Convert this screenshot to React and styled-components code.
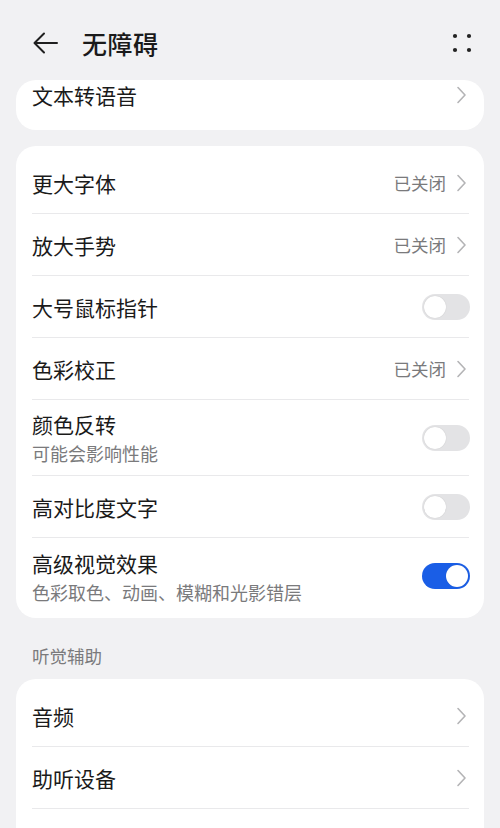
import React from "react";
import styled, { createGlobalStyle } from "styled-components";

const GlobalStyle = createGlobalStyle`
  html, body {
    margin: 0;
    padding: 0;
    background: #f1f1f3;
  }
  body {
    font-family: "Noto Sans CJK SC", "Noto Sans", sans-serif;
    color: #1a1a1a;
  }
`;

const Page = styled.div`
  width: 500px;
  height: 828px;
  overflow: hidden;
  background: #f1f1f3;
  padding: 0 16px;
  box-sizing: border-box;
`;

const Header = styled.div`
  height: 80px;
  box-sizing: border-box;
  padding-top: 28px;
  display: flex;
  align-items: flex-start;
`;

const BackButton = styled.div`
  width: 30px;
  height: 30px;
  margin-left: 15px;
  display: flex;
  align-items: center;
  justify-content: center;
`;

const Title = styled.h1`
  margin: 0 0 0 21px;
  font-size: 25px;
  font-weight: 500;
  line-height: 30px;
  flex: 1;
  letter-spacing: 0.5px;
`;

const MoreButton = styled.div`
  width: 30px;
  height: 30px;
  margin-right: 7px;
  display: flex;
  align-items: center;
  justify-content: center;
`;

const Card = styled.div`
  background: #fff;
  border-radius: 20px;
  padding: ${(p) => (p.$top ? "0" : "6px 0 4px")};
  margin-bottom: ${(p) => (p.$gap ? "16px" : "0")};
  height: ${(p) => (p.$top ? "50px" : "auto")};
  overflow: hidden;
`;

const Row = styled.div`
  display: flex;
  align-items: ${(p) => (p.$top ? "flex-start" : "center")};
  min-height: ${(p) => (p.$top ? "30px" : p.$sub ? "76px" : "62px")};
  margin: 0 15px 0 16px;
  box-sizing: border-box;
  border-bottom: ${(p) => (p.$last ? "none" : "1px solid #e9e9eb")};
  opacity: ${(p) => (p.$faded ? 0.12 : 1)};
`;

const Texts = styled.div`
  flex: 1;
  display: flex;
  flex-direction: column;
  gap: 3px;
`;

const Label = styled.div`
  font-size: 21px;
  line-height: ${(p) => (p.$tall ? "30px" : "28px")};
  color: #1a1a1a;
`;

const Sub = styled.div`
  font-size: 18px;
  line-height: 24px;
  color: #7a7a7c;
`;

const Value = styled.span`
  font-size: 17.5px;
  color: #7a7a7c;
  margin-right: 9px;
`;

const SectionTitle = styled.div`
  font-size: 17.5px;
  line-height: 24px;
  color: #7a7a7c;
  padding: 26px 16px 11px;
`;

const ChevronBox = styled.div`
  height: 30px;
  display: flex;
  align-items: center;
`;

const Track = styled.div`
  width: 48px;
  height: 26px;
  border-radius: 13px;
  background: ${(p) => (p.$on ? "#1a5ee6" : "#e3e3e5")};
  position: relative;
  flex-shrink: 0;
  margin-right: -1px;
`;

const Knob = styled.div`
  position: absolute;
  top: 2px;
  left: ${(p) => (p.$on ? "24px" : "2px")};
  width: 22px;
  height: 22px;
  border-radius: 50%;
  background: #fff;
  box-shadow: 0 0 1px rgba(0, 0, 0, 0.2);
`;

const Chevron = () => (
  <svg width="12" height="18" viewBox="0 0 12 18" style={{ marginRight: 2 }}>
    <path d="M3 1.5 L10 9 L3 16.5" fill="none" stroke="#b4b4b6" strokeWidth="1.6" strokeLinecap="round" strokeLinejoin="round" />
  </svg>
);

const Toggle = ({ on }) => (
  <Track $on={on}>
    <Knob $on={on} />
  </Track>
);

const Item = ({ label, sub, value, toggle, on, last, faded }) => (
  <Row $sub={!!sub} $last={last} $faded={faded}>
    <Texts>
      <Label>{label}</Label>
      {sub && <Sub>{sub}</Sub>}
    </Texts>
    {value && <Value>{value}</Value>}
    {toggle ? <Toggle on={on} /> : <Chevron />}
  </Row>
);

const visionItems = [
  { label: "更大字体", value: "已关闭" },
  { label: "放大手势", value: "已关闭" },
  { label: "大号鼠标指针", toggle: true },
  { label: "色彩校正", value: "已关闭" },
  { label: "颜色反转", sub: "可能会影响性能", toggle: true },
  { label: "高对比度文字", toggle: true },
  { label: "高级视觉效果", sub: "色彩取色、动画、模糊和光影错层", toggle: true, on: true },
];

const App = () => (
  <Page>
    <GlobalStyle />
    <Header>
      <BackButton>
        <svg width="28" height="24" viewBox="0 0 28 24">
          <path d="M25 12 H3 M12 2.5 L2.5 12 L12 21.5" fill="none" stroke="#1f1f1f" strokeWidth="2" strokeLinecap="round" strokeLinejoin="round" />
        </svg>
      </BackButton>
      <Title>无障碍</Title>
      <MoreButton>
        <svg width="20" height="20" viewBox="0 0 20 20">
          <circle cx="3" cy="3" r="2.1" fill="#222" />
          <circle cx="17" cy="3" r="2.1" fill="#222" />
          <circle cx="3" cy="17" r="2.1" fill="#222" />
          <circle cx="17" cy="17" r="2.1" fill="#222" />
        </svg>
      </MoreButton>
    </Header>

    <Card $top $gap>
      <Row $top $last>
        <Texts>
          <Label $tall>文本转语音</Label>
        </Texts>
        <ChevronBox>
          <Chevron />
        </ChevronBox>
      </Row>
    </Card>

    <Card>
      {visionItems.map((it, i) => (
        <Item key={it.label} {...it} last={i === visionItems.length - 1} />
      ))}
    </Card>

    <SectionTitle>听觉辅助</SectionTitle>

    <Card>
      <Item label="音频" />
      <Item label="助听设备" />
      <Item label="实时字幕" value="已关闭" faded last />
    </Card>
  </Page>
);

export default App;
